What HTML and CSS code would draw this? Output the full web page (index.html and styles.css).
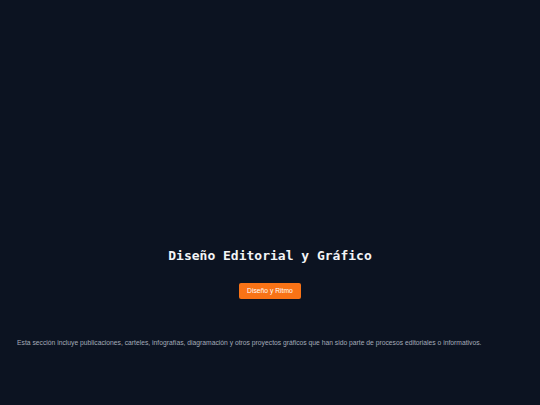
FILE: index.html
```html
<!DOCTYPE html>
<html lang="es">
<head>
<meta charset="utf-8">
<title>Diseño Editorial y Gráfico</title>
<link rel="stylesheet" href="styles.css">
</head>
<body>
<main class="page">
  <section class="hero">
    <h1 class="title">Diseño Editorial y Gráfico</h1>
    <a class="btn" href="#">Diseño y Ritmo</a>
  </section>
  <p class="intro">Esta sección incluye publicaciones, carteles, infografías, diagramación y otros proyectos gráficos que han sido parte de procesos editoriales o informativos.</p>
</main>
</body>
</html>
```
FILE: styles.css
```css
html, body {
  margin: 0;
  padding: 0;
  background: #0c1321;
}
.page {
  min-height: 405px;
  box-sizing: border-box;
  padding: 247px 17px 0;
  font-family: "Liberation Sans", Arial, sans-serif;
}
.hero {
  display: flex;
  flex-direction: column;
  align-items: center;
}
.title {
  margin: 0;
  font-family: "DejaVu Sans Mono", monospace;
  font-weight: bold;
  font-size: 13px;
  line-height: 18px;
  color: #f3f4f6;
}
.btn {
  margin-top: 18px;
  display: inline-block;
  background: #f97316;
  color: #ffffff;
  text-decoration: none;
  font-size: 6.75px;
  line-height: 10px;
  padding: 3px 8px;
  border-radius: 2px;
}
.intro {
  margin: 39px 0 0;
  font-size: 6.75px;
  line-height: 10px;
  color: #a3aab8;
}
```
